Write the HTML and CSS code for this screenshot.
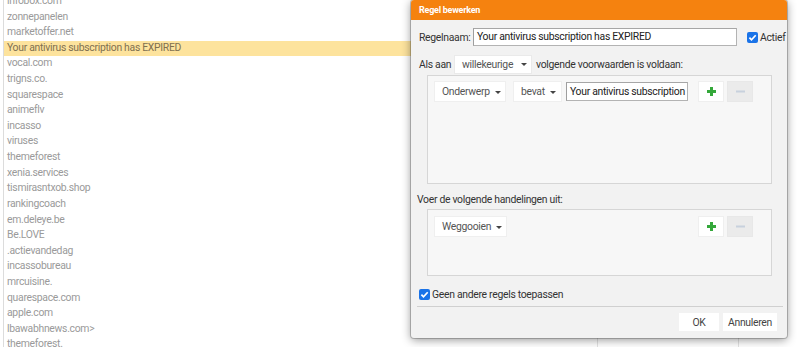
FILE: index.html
```html
<!DOCTYPE html>
<html lang="nl">
<head>
<meta charset="utf-8">
<title>Regel bewerken</title>
<link rel="stylesheet" href="styles.css">
</head>
<body>
<div class="page">
  <div class="col col-main">
    <ul class="list">
      <li>infobox.com</li>
      <li>zonnepanelen</li>
      <li>marketoffer.net</li>
      <li class="sel">Your antivirus subscription has EXPIRED</li>
      <li>vocal.com</li>
      <li>trigns.co.</li>
      <li>squarespace</li>
      <li>animeflv</li>
      <li>incasso</li>
      <li>viruses</li>
      <li>themeforest</li>
      <li>xenia.services</li>
      <li>tismirasntxob.shop</li>
      <li>rankingcoach</li>
      <li>em.deleye.be</li>
      <li>Be.LOVE</li>
      <li>.actievandedag</li>
      <li>incassobureau</li>
      <li>mrcuisine.</li>
      <li>quarespace.com</li>
      <li>apple.com</li>
      <li>lbawabhnews.com&gt;</li>
      <li>themeforest.</li>
    </ul>
  </div>
  <div class="col col-b"></div>
  <div class="col col-c"></div>
</div>

<div class="dialog">
  <div class="dlg-head">Regel bewerken</div>
  <div class="dlg-body">
    <div class="row row-name">
      <span class="lbl-name">Regelnaam:</span>
      <div class="input input-name">Your antivirus subscription has EXPIRED</div>
      <span class="check-wrap">
        <svg class="cb" width="11" height="11" viewBox="0 0 11 11"><rect x="0" y="0" width="11" height="11" rx="2" fill="#1a73e8"/><path d="M2.4 5.6 L4.5 7.8 L8.7 3.2" fill="none" stroke="#fff" stroke-width="1.7"/></svg>
        <span>Actief</span>
      </span>
    </div>

    <div class="row row-match">
      <span class="lbl-als">Als aan</span>
      <span class="dd dd-any">willekeurige<i class="caret"></i></span>
      <span class="match-text">volgende voorwaarden is voldaan:</span>
    </div>

    <div class="box box-cond">
      <div class="box-row">
        <span class="dd dd-field">Onderwerp<i class="caret"></i></span>
        <span class="dd dd-op">bevat<i class="caret"></i></span>
        <div class="input input-val">Your antivirus subscription</div>
        <span class="btn-sq btn-plus"><svg width="9" height="9" viewBox="0 0 9 9"><path d="M3 0h3v3h3v3H6v3H3V6H0V3h3z" fill="#34a83a"/></svg></span>
        <span class="btn-sq btn-minus"><svg width="9" height="3" viewBox="0 0 9 3"><rect x="0" y="0.5" width="9" height="2" fill="#c8d1dd"/></svg></span>
      </div>
    </div>

    <div class="section-lbl">Voer de volgende handelingen uit:</div>

    <div class="box box-act">
      <div class="box-row">
        <span class="dd dd-act">Weggooien<i class="caret"></i></span>
        <span class="btn-sq btn-plus"><svg width="9" height="9" viewBox="0 0 9 9"><path d="M3 0h3v3h3v3H6v3H3V6H0V3h3z" fill="#34a83a"/></svg></span>
        <span class="btn-sq btn-minus"><svg width="9" height="3" viewBox="0 0 9 3"><rect x="0" y="0.5" width="9" height="2" fill="#c8d1dd"/></svg></span>
      </div>
    </div>

    <div class="row row-stop">
      <svg class="cb" width="11" height="11" viewBox="0 0 11 11"><rect x="0" y="0" width="11" height="11" rx="2" fill="#1a73e8"/><path d="M2.4 5.6 L4.5 7.8 L8.7 3.2" fill="none" stroke="#fff" stroke-width="1.7"/></svg>
      <span>Geen andere regels toepassen</span>
    </div>

    <div class="sep"></div>

    <div class="row row-buttons">
      <span class="btn btn-ok">OK</span>
      <span class="btn btn-cancel">Annuleren</span>
    </div>
  </div>
</div>
</body>
</html>
```

FILE: styles.css
```css
* { box-sizing: border-box; }

html, body {
  margin: 0;
  padding: 0;
}

body {
  font-family: Roboto, "Noto Sans", sans-serif;
  font-size: 10.4px;
  letter-spacing: -0.3px;
  background: #ffffff;
  overflow: hidden;
  width: 799px;
  height: 347px;
}

/* background table */
.page {
  display: grid;
  grid-template-columns: 597px 141px 1fr;
  height: 347px;
  overflow: hidden;
}

.col-main {
  margin-left: 3px;
  border-left: 1px solid #dcdcdc;
  overflow: hidden;
}

.col-b,
.col-c {
  border-left: 1px solid #e3e3e3;
}

.list {
  list-style: none;
  margin: -6px 0 0 0;
  padding: 0;
}

.list li {
  height: 15.62px;
  line-height: 13.6px;
  padding-left: 3px;
  color: #9a9a9a;
  white-space: nowrap;
}

.list li.sel {
  background: #fde39d;
  color: #7f7050;
}

/* dialog */
.dialog {
  position: absolute;
  left: 411px;
  top: 0;
  width: 376px;
  height: 338px;
  background: #f2f2f2;
  border-radius: 3px;
  box-shadow: 0 0 0 1px rgba(0, 0, 0, 0.2), 0 2px 10px rgba(0, 0, 0, 0.42);
  display: flex;
  flex-direction: column;
  color: #333333;
  overflow: hidden;
}

.dlg-head {
  height: 20px;
  line-height: 20px;
  background: #f5820f;
  color: #ffffff;
  font-weight: 700;
  font-size: 9px;
  letter-spacing: -0.25px;
  padding-left: 8px;
  flex: none;
}

.dlg-body {
  flex: 1;
  display: flex;
  flex-direction: column;
  padding: 0 10px 7px 8px;
}

.row {
  display: flex;
  align-items: center;
  flex: none;
}

.row-name {
  height: 18px;
  margin-top: 8px;
}

.lbl-name {
  width: 54px;
  flex: none;
}

.input {
  background: #ffffff;
  border: 1px solid #b3b3b3;
  border-top-color: #a6a6a6;
  border-left-color: #9e9e9e;
  padding: 0 3px;
  line-height: 16px;
  color: #222222;
  overflow: hidden;
  white-space: nowrap;
  flex: none;
}

.input-name {
  width: 264px;
  height: 18px;
}

.check-wrap {
  display: flex;
  align-items: center;
  gap: 2px;
  margin-left: 10px;
}

.cb {
  flex: none;
  display: block;
}

.row-match {
  height: 18px;
  margin-top: 9px;
}

.lbl-als {
  width: 36px;
  flex: none;
}

.dd {
  display: inline-flex;
  align-items: center;
  background: #ffffff;
  color: #555555;
  padding-left: 7px;
  flex: none;
  box-shadow: 0 0 0 1px rgba(0, 0, 0, 0.03);
}

.caret {
  display: inline-block;
  width: 0;
  height: 0;
  border-left: 3px solid transparent;
  border-right: 3px solid transparent;
  border-top: 3px solid #444444;
  margin-left: 5px;
  margin-top: 1px;
}

.dd-any {
  width: 76px;
  height: 17px;
  padding-left: 7px;
}

.dd-any .caret {
  margin-left: 8px;
}

.match-text {
  margin-left: 5px;
}

.box {
  flex: none;
  margin-left: 8px;
  width: 345px;
  border: 1px solid #d6d6d6;
  background: #f7f7f7;
  padding: 6px 19px 0 7px;
}

.box-cond {
  margin-top: 2px;
  height: 109px;
}

.box-act {
  margin-top: 2px;
  height: 67px;
  padding-top: 7px;
}

.box-row {
  display: flex;
  align-items: stretch;
  height: 19px;
}

.dd-field {
  width: 70px;
  margin-right: 9px;
}

.dd-op {
  width: 47px;
  margin-right: 5px;
}

.input-val {
  width: 122px;
  height: 19px;
  line-height: 17px;
}

.dd-act {
  width: 71px;
}

.btn-sq {
  width: 24px;
  display: flex;
  align-items: center;
  justify-content: center;
  flex: none;
}

.btn-plus {
  margin-left: auto;
  background: #ffffff;
  box-shadow: 0 0 0 1px rgba(0, 0, 0, 0.03);
}

.btn-minus {
  margin-left: 5px;
  background: #ebebeb;
  box-shadow: 0 0 0 1px rgba(0, 0, 0, 0.06);
}

.section-lbl {
  flex: none;
  height: 14px;
  line-height: 14px;
  margin-top: 9px;
  margin-left: -2px;
}

.row-stop {
  height: 14px;
  margin-top: 11px;
  gap: 2px;
}

.sep {
  flex: none;
  height: 1px;
  background: #d0d0d0;
  margin: 5px -6px 0 -2px;
}

.row-buttons {
  height: 18px;
  margin-top: 6px;
  justify-content: flex-end;
  gap: 4px;
}

.btn {
  display: flex;
  align-items: center;
  justify-content: center;
  height: 18px;
  background: #ffffff;
  color: #444444;
}

.btn-ok {
  width: 40px;
}

.btn-cancel {
  width: 54px;
}
```
